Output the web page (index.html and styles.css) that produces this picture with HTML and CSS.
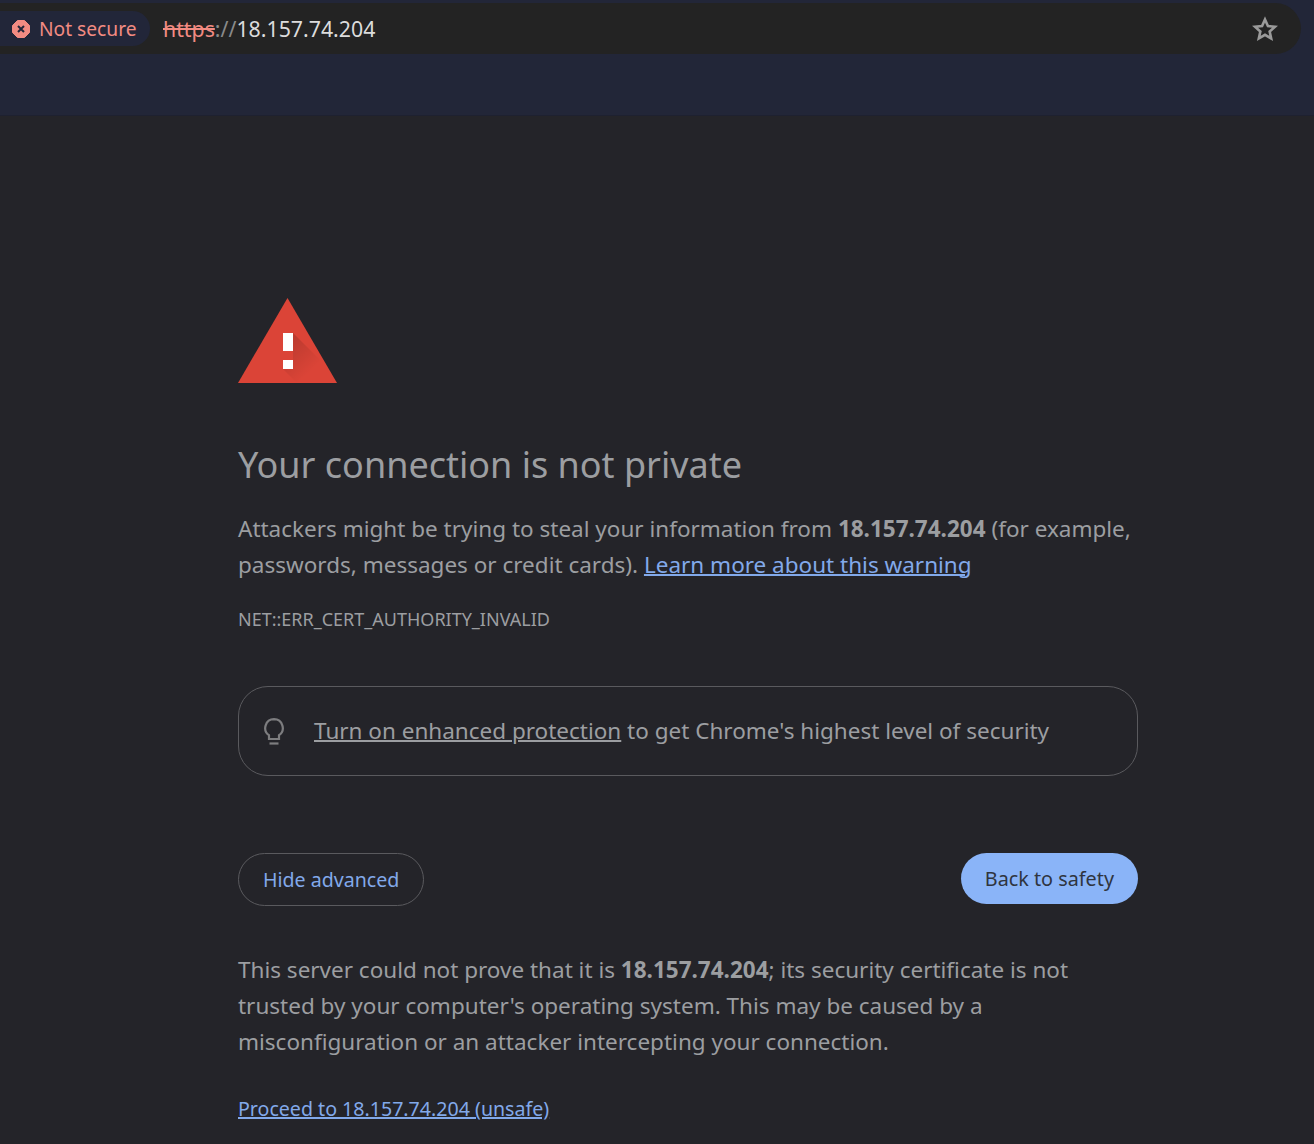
FILE: index.html
```html
<!DOCTYPE html>
<html lang="en">
<head>
<meta charset="utf-8">
<title>Privacy error</title>
<link rel="stylesheet" href="styles.css">
</head>
<body>
<header class="toolbar">
  <div class="omnibox">
    <div class="chip">
      <svg class="chip-icon" viewBox="0 0 18 18"><path d="M5.500.5h7l5 5v7l-5 5h-7l-5-5v-7z" fill="#f28b82" stroke="#f28b82" stroke-linejoin="round"/><path d="M6 6l6 6M12 6l-6 6" stroke="#222639" stroke-width="2" fill="none"/></svg>
      <span>Not secure</span>
    </div>
    <div class="url"><span class="scheme">https</span><span class="sep">://</span><span class="host">18.157.74.204</span></div>
    <svg class="star" viewBox="0 0 24 24"><path d="M12 3.200l2.700 6 6.500.7-4.900 4.400 1.400 6.400L12 17.400l-5.700 3.300 1.400-6.400-4.900-4.400 6.500-.7z" fill="none" stroke="#9a9a9a" stroke-width="2.400" stroke-linejoin="miter"/></svg>
  </div>
</header>
<main class="content">
  <svg class="warning" viewBox="0 0 99 85">
    <defs>
      <linearGradient id="shade" x1="0.150" y1="0.150" x2="0.850" y2="0.850">
        <stop offset="0" stop-color="#000" stop-opacity=".14"/>
        <stop offset="0.700" stop-color="#000" stop-opacity="0"/>
      </linearGradient>
    </defs>
    <path d="M49.500 0L99 85H0z" fill="#db4437"/>
    <path d="M55 35L90.600 70.600 99 85H59L45 71h10z" fill="url(#shade)"/>
    <rect x="45" y="35" width="10" height="18" fill="#fff"/>
    <rect x="45" y="62" width="10" height="9" fill="#fff"/>
  </svg>
  <h1 class="title">Your connection is not private</h1>
  <p class="text">Attackers might be trying to steal your information from <strong>18.157.74.204</strong> (for example, passwords, messages or credit cards). <a class="link" href="#">Learn more about this warning</a></p>
  <div class="code">NET::ERR_CERT_AUTHORITY_INVALID</div>
  <div class="promo">
    <svg class="bulb" viewBox="0 0 20 27"><path d="M10 1.200a8.800 8.800 0 0 0-5 16V21h10v-3.800a8.800 8.800 0 0 0-5-16z" fill="none" stroke="#7d7d7f" stroke-width="2.200"/><path d="M5.500 25.500h9" stroke="#7d7d7f" stroke-width="2.200"/></svg>
    <span class="promo-text"><a class="plain-link" href="#">Turn on enhanced protection</a> to get Chrome's highest level of security</span>
  </div>
  <div class="actions">
    <button class="btn btn-outline">Hide advanced</button>
    <button class="btn btn-primary">Back to safety</button>
  </div>
  <p class="text details">This server could not prove that it is <strong>18.157.74.204</strong>; its security certificate is not trusted by your computer's operating system. This may be caused by a misconfiguration or an attacker intercepting your connection.</p>
  <a class="link proceed" href="#">Proceed to 18.157.74.204 (unsafe)</a>
</main>
</body>
</html>
```
FILE: styles.css
```css
* { box-sizing: border-box; }
html, body { margin: 0; height: 1144px; overflow: hidden; }
body {
  background: #242429;
  color: #9c9ea1;
  font-family: "Noto Sans", sans-serif;
}
.toolbar {
  height: 116px;
  padding-top: 3px;
  background: #222638;
  border-bottom: 1px solid #1e2130;
}
.omnibox {
  width: 1301px;
  height: 51px;
  display: flex;
  align-items: center;
  background: #232323;
  border-radius: 0 26px 26px 0;
  padding-right: 23px;
}
.chip {
  display: flex;
  align-items: center;
  gap: 9px;
  height: 35px;
  width: 150px;
  padding: 0 0 0 12px;
  background: #222639;
  border-radius: 0 18px 18px 0;
  color: #f28b82;
  font-size: 19.200px;
  white-space: nowrap;
}
.chip-icon { width: 18px; height: 18px; flex: none; }
.url { margin-left: 13px; font-size: 21.300px; flex: 1; padding-bottom: 1px; }
.scheme { color: #f28b82; text-decoration: line-through; }
.sep { color: #8a8a8a; }
.host { color: #dcdcdc; }
.star { width: 26px; height: 26px; flex: none; }
.content {
  width: 900px;
  margin-left: 238px;
  padding-top: 182px;
}
.warning { display: block; width: 99px; height: 85px; }
.title {
  margin: 57px 0 0;
  font-size: 36px;
  font-weight: 400;
  line-height: 50px;
  color: inherit;
}
.text { margin: 21px 0 0; font-size: 22.500px; line-height: 36px; }
.text strong { font-weight: 700; }
.link { color: #82a9ea; text-decoration: underline; text-decoration-thickness: 1.500px; }
.code { margin-top: 23px; font-size: 18px; line-height: 26px; }
.promo {
  display: flex;
  align-items: center;
  gap: 30px;
  height: 90px;
  margin-top: 54px;
  padding-left: 25px;
  border: 1.500px solid #5a5a5e;
  border-radius: 30px;
  font-size: 22.500px;
}
.promo-text { padding-bottom: 2px; }
.bulb { width: 20px; height: 27px; flex: none; }
.plain-link { color: inherit; text-decoration: underline; text-decoration-thickness: 1.500px; }
.actions {
  display: flex;
  justify-content: space-between;
  align-items: flex-start;
  margin-top: 77px;
}
.btn {
  font-family: inherit;
  border-radius: 27px;
  padding: 0 24px;
}
.btn-outline {
  height: 53px;
  font-size: 19.600px;
  background: transparent;
  border: 1.500px solid #5a5a5e;
  color: #82a9ea;
}
.btn-primary {
  height: 51px;
  font-size: 19.800px;
  background: #8ab4f8;
  border: 0;
  color: #2f3440;
}
.details { margin-top: 46px; }
.proceed { display: inline-block; margin-top: 34px; font-size: 19.600px; line-height: 30px; }
```
